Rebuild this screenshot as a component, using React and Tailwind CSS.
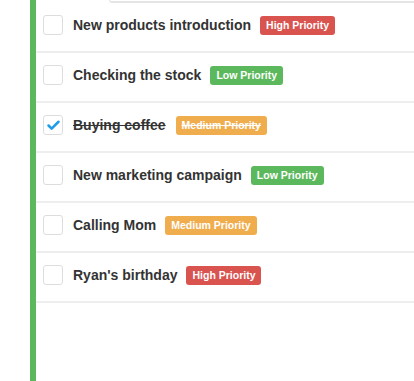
import { Check } from 'lucide-react'

const tasks = [
  { title: 'New products introduction', priority: 'High', done: false },
  { title: 'Checking the stock', priority: 'Low', done: false },
  { title: 'Buying coffee', priority: 'Medium', done: true },
  { title: 'New marketing campaign', priority: 'Low', done: false },
  { title: 'Calling Mom', priority: 'Medium', done: false },
  { title: "Ryan's birthday", priority: 'High', done: false },
]

const badgeColors = {
  High: 'bg-[#d9534f]',
  Low: 'bg-[#5cb85c]',
  Medium: 'bg-[#f0ad4e]',
}

function TaskRow({ task }) {
  return (
    <div className="flex items-center h-[50px] pl-[7px] pb-[4px] border-b-2 border-[#eeeeee]">
      <div className="w-[20px] h-[20px] border border-[#dddddd] rounded-[3px] bg-white flex items-center justify-center">
        {task.done && <Check size={15} strokeWidth={4} className="text-[#1e9be9]" />}
      </div>
      <span
        className={`ml-[10px] text-[14px] font-bold text-[#333333] ${task.done ? 'line-through decoration-[#333333] pr-[4px]' : ''}`}
      >
        {task.title}
      </span>
      <span
        className={`${task.done ? 'ml-[6px] line-through' : 'ml-[9px]'} px-[6px] pt-[2px] pb-[3px] rounded-[3px] text-[10.5px] font-bold text-white leading-[14px] ${badgeColors[task.priority]}`}
      >
        {task.priority} Priority
      </span>
    </div>
  )
}

export default function App() {
  return (
    <div className="h-[381px] w-[414px] bg-white flex font-['Liberation_Sans',Arial,sans-serif] overflow-hidden">
      <div className="w-[30px]" />
      <div className="w-[6px] bg-[#5cb85c]" />
      <div className="flex-1 flex flex-col">
        <div className="h-[3px] flex">
          <div className="w-[73px]" />
          <div className="flex-1 border-b-2 border-l border-[#e5e5e5] rounded-bl-[3px]" />
        </div>
        {tasks.map((t) => (
          <TaskRow key={t.title} task={t} />
        ))}
      </div>
    </div>
  )
}
